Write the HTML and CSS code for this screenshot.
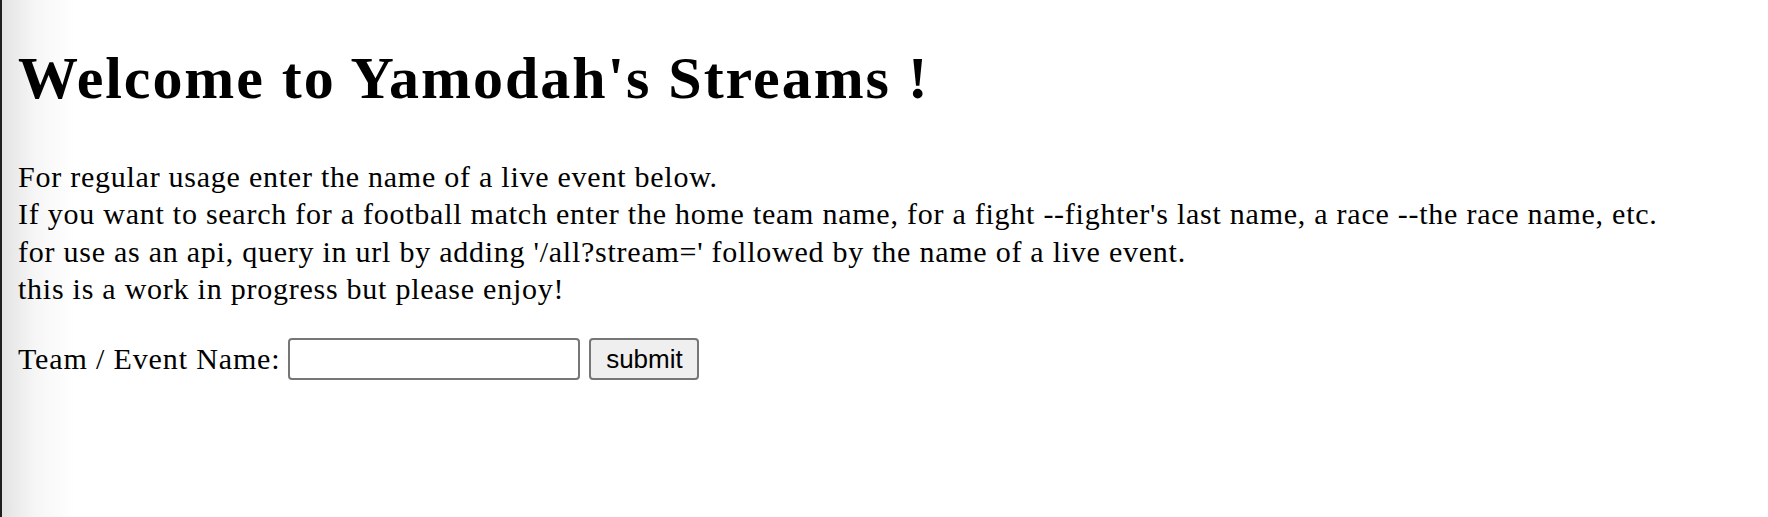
FILE: index.html
```html
<!DOCTYPE html>
<html>
<head>
<meta charset="utf-8">
<title>Yamodah's Streams</title>
<link rel="stylesheet" href="styles.css">
</head>
<body>
<main class="page">
  <h1 class="title">Welcome to Yamodah's Streams !</h1>
  <p class="intro">For regular usage enter the name of a live event below.<br>If you want to search for a football match enter the home team name, for a fight --fighter's last name, a race --the race name, etc.<br>for use as an api, query in url by adding '/all?stream=' followed by the name of a live event.<br>this is a work in progress but please enjoy!</p>
  <form class="search">
    <label class="label" for="q">Team / Event Name:</label>
    <input class="field" id="q" type="text">
    <button class="btn" type="button">submit</button>
  </form>
</main>
</body>
</html>
```
FILE: styles.css
```css
html, body {
  height: 100%;
}
body {
  margin: 0;
  background: linear-gradient(to right, #1e1e1e 0, #1e1e1e 2px, #e3e3e3 2px, #f6f6f6 35px, #ffffff 75px);
  font-family: "Liberation Serif", "Times New Roman", serif;
  color: #000;
}
.page {
  padding: 1px 0 0 18px;
}
.title {
  font-size: 60px;
  font-weight: bold;
  line-height: 66px;
  letter-spacing: 1.95px;
  margin: 44px 0 0 0;
}
.intro {
  font-size: 30px;
  line-height: 37.3px;
  letter-spacing: 0.75px;
  margin: 47px 0 0 0;
}
.search {
  margin: 31px 0 0 0;
  font-size: 30px;
  letter-spacing: 0.86px;
  display: flex;
  align-items: center;
}
.label {
  margin-right: 8px;
}
.field {
  width: 292px;
  height: 42px;
  box-sizing: border-box;
  border: 2px solid #767676;
  border-radius: 4px;
  margin: 0 9px 0 0;
  padding: 2px 4px;
  font-size: 24px;
}
.btn {
  width: 110px;
  height: 42px;
  box-sizing: border-box;
  border: 2px solid #767676;
  border-radius: 4px;
  background: #efefef;
  font-family: "Liberation Sans", Arial, sans-serif;
  font-size: 26px;
  letter-spacing: 0;
  color: #000;
  padding: 0;
}
```
